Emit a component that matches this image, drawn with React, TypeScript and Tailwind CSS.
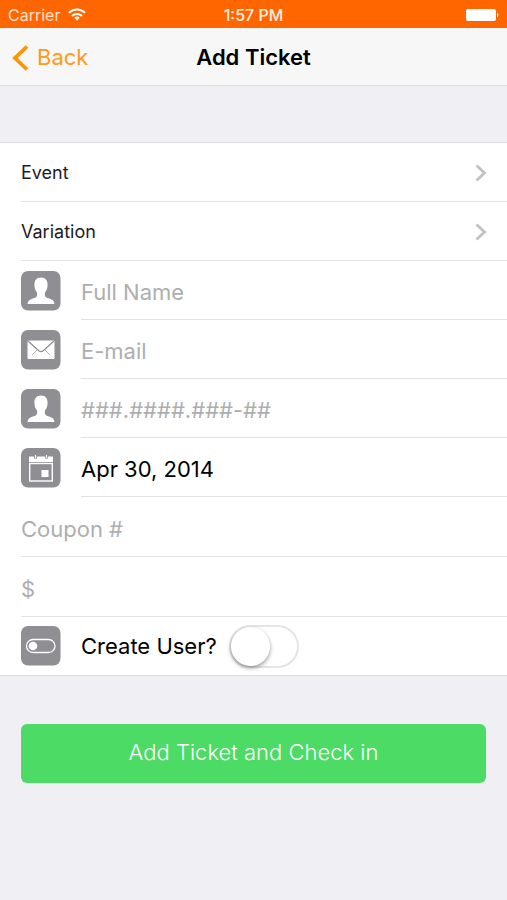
import React, { useState } from 'react';

interface FieldRowProps {
  label: string;
  placeholder?: string;
  defaultValue?: string;
  icon: React.ReactNode;
}

const IconTile: React.FC<{ children: React.ReactNode }> = ({ children }) => (
  <svg viewBox="0 0 40 40" className="w-10 h-10 shrink-0" aria-hidden="true">
    <rect width="39.500" height="39.500" rx="7" fill="#8e8e93" />
    {children}
  </svg>
);

const PersonIcon = () => (
  <IconTile>
    <path
      d="M20 6.500c-4.400 0-6.600 2.800-6.600 7 0 3.200.9 6 2.400 7.600.6 2 .5 3.700-.3 4.700-1.200 1.400-4.500 1.700-6.500 2.900-1.500.9-2.300 2.300-2.500 4.300h27c-.2-2-1-3.400-2.500-4.300-2-1.200-5.300-1.500-6.500-2.900-.8-1-.9-2.700-.3-4.700 1.500-1.600 2.400-4.400 2.400-7.600 0-4.200-2.200-7-6.600-7z"
      fill="#fff"
    />
  </IconTile>
);

const MailIcon = () => (
  <IconTile>
    <rect x="6.500" y="10.500" width="27" height="18.500" rx="1" fill="#fff" />
    <path d="M7 11l10.800 9.800c1.300 1.100 3.100 1.100 4.400 0L33 11" fill="none" stroke="#8e8e93" strokeWidth="1.200" />
    <path d="M16.500 19.500L11 25M23.500 19.500L29 25" stroke="#b4b4b8" strokeWidth="1" />
  </IconTile>
);

const CalendarIcon = () => (
  <IconTile>
    <path d="M8 8.500h24v5.500H8z" fill="#fff" />
    <rect x="8.700" y="15.500" width="22.600" height="17.500" fill="none" stroke="#fff" strokeWidth="1.400" />
    <rect x="20.500" y="22" width="7" height="7" fill="#fff" />
    <path d="M14.500 7v3.500M25.500 7v3.500" stroke="#8e8e93" strokeWidth="3" />
    <path d="M14.500 7v3M25.500 7v3" stroke="#fff" strokeWidth="1.200" />
  </IconTile>
);

const ToggleIcon = () => (
  <IconTile>
    <rect x="5.500" y="13.500" width="28.500" height="13" rx="6.500" fill="none" stroke="#fff" strokeWidth="1.300" />
    <circle cx="12" cy="20" r="4.300" fill="#fff" />
  </IconTile>
);

const StatusBar = () => (
  <div className="grid grid-cols-3 items-center h-7 px-2 pt-px bg-[#ff6600] text-white text-base">
    <div className="flex items-center gap-2 text-white/80">
      <span>Carrier</span>
      <svg viewBox="0 0 18 13" className="w-[18px] h-[13px]" fill="none" stroke="#fff" strokeWidth="2" aria-hidden="true">
        <path d="M1 4.800a11.500 11.500 0 0 1 16 0" />
        <path d="M4 8a7.200 7.200 0 0 1 10 0" />
        <path d="M9 12.500L6.300 9.800a4 4 0 0 1 5.400 0z" fill="#fff" stroke="none" />
      </svg>
    </div>
    <span className="text-center font-medium text-white/90">1:57 PM</span>
    <svg viewBox="0 0 34 12" className="w-[34px] h-3 justify-self-end" fill="#fff" aria-hidden="true">
      <rect x="1" width="30" height="12" rx="2" />
      <path d="M32 4c2 .5 2 3.500 0 4z" />
    </svg>
  </div>
);

const PickerRow: React.FC<{ label: string }> = ({ label }) => (
  <li className="pl-[21px]">
    <button
      type="button"
      className="flex items-center justify-between w-full h-[59px] pt-px pr-5 border-b border-[#e2e2e4] text-lg text-[#1c1c1e]"
    >
      {label}
      <svg viewBox="0 0 12 18" className="w-3 h-[18px]" fill="none" stroke="#c2c2c6" strokeWidth="2.800" aria-hidden="true">
        <path d="M1.500 1.500L9.500 9l-8 7.500" />
      </svg>
    </button>
  </li>
);

const FieldRow: React.FC<FieldRowProps> = ({ label, placeholder, defaultValue, icon }) => (
  <li className="flex items-center gap-5 h-[59px] pl-[21px]">
    {icon}
    <input
      type="text"
      aria-label={label}
      placeholder={placeholder}
      defaultValue={defaultValue}
      className="flex-1 min-w-0 h-full pt-1 border-b border-[#e2e2e4] text-[22px] text-black placeholder:text-[#aeaeb0] outline-none"
    />
  </li>
);

const PlainRow: React.FC<{ label: string; placeholder: string }> = ({ label, placeholder }) => (
  <li className="h-[60px] pl-[21px]">
    <input
      type="text"
      aria-label={label}
      placeholder={placeholder}
      className="w-full h-full pt-1 border-b border-[#e2e2e4] text-[22px] text-black placeholder:text-[#aeaeb0] outline-none"
    />
  </li>
);

const App: React.FC = () => {
  const [createUser, setCreateUser] = useState<boolean>(false);

  return (
    <div className="min-h-screen bg-[#efeff4] font-['Inter','Liberation_Sans',sans-serif]">
      <StatusBar />

      <header className="grid grid-cols-3 items-center h-[58px] px-3 pt-0.5 bg-[#f7f7f7] border-b border-[#dcdce0]">
        <a href="#" className="flex items-center gap-2 text-[22px] text-[#ff9a1a]">
          <svg viewBox="0 0 17 28" className="w-[17px] h-7" fill="none" stroke="#ff9500" strokeWidth="3.800" aria-hidden="true">
            <path d="M15 2.500L3 14l12 11.500" />
          </svg>
          Back
        </a>
        <h1 className="text-center text-[22px] font-semibold text-black">Add Ticket</h1>
      </header>

      <form className="pt-14" onSubmit={(e) => e.preventDefault()}>
        <ul className="bg-white border-y border-[#dcdce0]">
          <PickerRow label="Event" />
          <PickerRow label="Variation" />
          <FieldRow label="Full Name" placeholder="Full Name" icon={<PersonIcon />} />
          <FieldRow label="E-mail" placeholder="E-mail" icon={<MailIcon />} />
          <FieldRow label="Document" placeholder="###.####.###-##" icon={<PersonIcon />} />
          <FieldRow label="Date" defaultValue="Apr 30, 2014" icon={<CalendarIcon />} />
          <PlainRow label="Coupon" placeholder="Coupon #" />
          <PlainRow label="Price" placeholder="$" />
          <li className="flex items-center h-[58px] pl-[21px]">
            <ToggleIcon />
            <label htmlFor="create-user" className="pl-5 pr-3 text-[22px] text-black">
              Create User?
            </label>
            <input
              id="create-user"
              type="checkbox"
              role="switch"
              checked={createUser}
              onChange={(e) => setCreateUser(e.target.checked)}
              className="appearance-none shrink-0 w-[70px] h-[43px] rounded-full border-2 border-[#e5e5e5] bg-white checked:bg-[#4cd964] checked:border-[#4cd964] before:block before:w-[39px] before:h-[39px] before:rounded-full before:bg-white before:shadow-[0_2px_4px_rgba(0,0,0,0.4)] checked:before:translate-x-[27px] before:transition-transform"
            />
          </li>
        </ul>

        <div className="px-[21px] pt-12">
          <button type="submit" className="w-full h-[59px] pb-0.5 rounded-md bg-[#4cdb64] text-[22px] font-light text-white">
            Add Ticket and Check in
          </button>
        </div>
      </form>
    </div>
  );
};

export default App;
